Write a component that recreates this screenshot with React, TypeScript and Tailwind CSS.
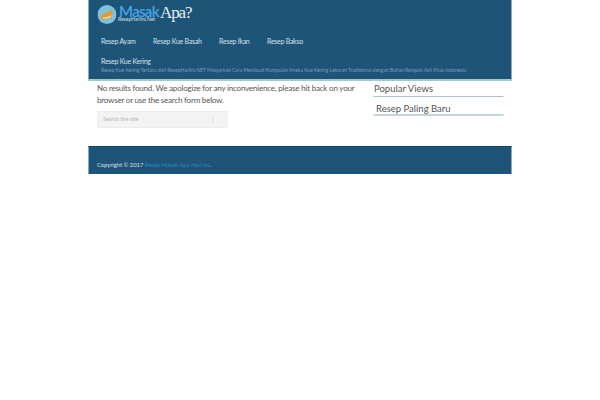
export default function App() {
  const nav = ["Resep Ayam", "Resep Kue Basah", "Resep Ikan", "Resep Bakso"];
  return (
    <div className="min-h-[400px] bg-white font-['Lato',sans-serif]">
      <div className="mx-auto w-[423px] -translate-x-[0.5px]">
        <header className="h-[81px] bg-[#1f5479] border-b-2 border-[#a3c9cf] pl-[9px] flex flex-col">
          <div className="h-[30px] flex items-center relative">
            <svg width="19" height="19" viewBox="0 0 19 19" className="mt-[-2px]">
              <circle cx="9.5" cy="9.5" r="9.5" fill="#7fc0dc" />
              <path d="M3 12 Q5 8 9 8 L15 5 L14.5 11 Q12 14.5 7 14.5 Q4 14.5 3 12Z" fill="#e8962f" />
              <path d="M5 12 Q9 13 14 10 L13 12.5 Q9 14.5 6 13.5Z" fill="#f6d58a" />
            </svg>
            <div className="ml-[3px] mt-[-8px] text-[#45a6ea] text-[15px] font-semibold leading-[10px] tracking-[-0.7px] w-[39px]">Masak</div>
            <div className="ml-[2px] mt-[-5px] text-[#e8eef2] text-[17px] leading-none tracking-[-1.1px] font-['Liberation_Serif',serif]">Apa?</div>
            <div className="absolute left-[21px] top-[17px] text-[5px] leading-[5px] text-[#cfe0ea]">ResepHariIni.Net</div>
          </div>
          <nav className="flex text-[7px] tracking-[-0.27px] leading-none text-[#d5e0e8] pl-[4px] gap-[17.5px] mt-[8px]">
            {nav.map((n) => <span key={n}>{n}</span>)}
          </nav>
          <div className="text-[7px] tracking-[-0.27px] leading-none text-[#d5e0e8] pl-[4px] mt-[13px]">Resep Kue Kering</div>
          <div className="text-[5px] leading-none text-[#7d9db4] pl-[4px] mt-[3px] whitespace-nowrap">Resep Kue Kering Tertaru dari ResepHariIni.NET Masyarkan Cara Membuat Kumpulan Aneka Kue Kering Lebaran Tradisional dengan Bahan Rempah Asli Khas Indonesia</div>
        </header>
        <main className="flex h-[65px]">
          <div className="w-[285px] pl-[9px] pt-[2px]">
            <p className="text-[8px] tracking-[-0.2px] leading-[11.5px] text-[#555] w-[262px]">No results found. We apologize for any inconvenience, please hit back on your browser or use the search form below.</p>
            <div className="mt-[5px] w-[130px] h-[17px] bg-[#f3f3f3] border border-[#ececec] flex items-center pl-[5px] text-[5.5px] text-[#b5b5b5] relative">
              Search the site
              <span className="absolute left-[114px] top-[5px] h-[6px] w-px bg-[#ddd]" />
            </div>
          </div>
          <aside className="w-[130px] pt-[2px]">
            <div className="text-[9.5px] leading-[12px] text-[#555] pl-px border-b border-[#a9c6cc] pb-px">Popular Views</div>
            <div className="mt-[6px] text-[9.5px] leading-[11px] text-[#555] pl-[3px] border-b-2 border-[#c3d6da]">Resep Paling Baru</div>
          </aside>
        </main>
        <footer className="h-[28px] bg-[#1f5479] border-t border-[#164463] pl-[9px] pt-[15px] text-[5.8px] leading-none text-[#d5e0e8]">
          Copyright © 2017 <span className="text-[#2b84c4]">Resep Masak Apa Hari Ini</span>.
        </footer>
      </div>
    </div>
  );
}
